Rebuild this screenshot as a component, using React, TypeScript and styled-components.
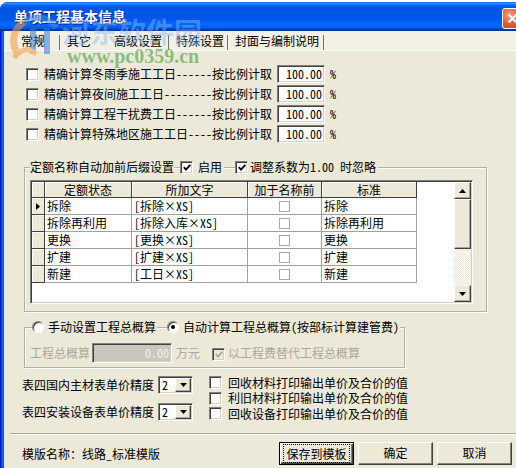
import React from "react";
import styled, { createGlobalStyle, css } from "styled-components";

const FONT = `"Noto Sans CJK SC", "Noto Sans", sans-serif`;
const BG = "#ECE9D8";

const GlobalStyle = createGlobalStyle`
  * { box-sizing: border-box; }
  html, body { margin: 0; padding: 0; background: #fff; }
  body {
    font-family: ${FONT};
    font-size: 12px;
    line-height: 14px;
    color: #000;
    font-feature-settings: "hwid" 1;
  }
`;

const raised = css`
  background: ${BG};
  border: 1px solid;
  border-color: #fff #404040 #404040 #fff;
  box-shadow: inset -1px -1px #aca899;
`;

const sunken = css`
  border: 1px solid;
  border-color: #808080 #fff #fff #808080;
  box-shadow: inset 1px 1px #404040, inset -1px -1px #d4d0c8;
`;

const Screen = styled.div`
  width: 516px;
  height: 468px;
  overflow: hidden;
  position: relative;
  background: #fff;
`;

const Window = styled.div`
  width: 528px;
  height: 490px;
  margin-top: 2px;
  border-radius: 8px 8px 0 0;
  overflow: hidden;
  background: linear-gradient(
    to right,
    #0019cf 0 1px,
    #0841d9 1px 2px,
    #166aee 2px 3px,
    #0855dd 3px 4px,
    #0855dd 4px
  );
  display: flex;
  flex-direction: column;
`;

const TitleBar = styled.div`
  height: 29px;
  flex: none;
  display: flex;
  align-items: flex-start;
  padding: 5px 5px 0 14px;
  background: linear-gradient(
    to bottom,
    #0058ee 0%,
    #3593ff 4%,
    #288eff 6%,
    #127dff 8%,
    #036ffc 10%,
    #0262ee 14%,
    #0057e5 20%,
    #0054e3 24%,
    #0055eb 56%,
    #005bf5 66%,
    #026afe 76%,
    #0062ef 86%,
    #0052d6 92%,
    #0040ab 94%,
    #003092 100%
  );
`;

const TitleText = styled.div`
  flex: 1;
  color: #fff;
  font-weight: bold;
  font-size: 14px;
  line-height: 18px;
  text-shadow: 1px 1px #0a1883;
`;

const CloseBtn = styled.div`
  width: 21px;
  height: 21px;
  margin-top: 1px;
  border: 1px solid #fff;
  border-radius: 3px;
  background: radial-gradient(circle at 35% 30%, #f3a27f 0%, #e3643c 45%, #c53c14 100%);
  display: flex;
  align-items: center;
  justify-content: center;
`;

const Body = styled.div`
  flex: 1;
  margin: 0 4px;
  background: ${BG};
  display: flex;
  flex-direction: column;
`;

const TabStrip = styled.div`
  height: 20px;
  flex: none;
  display: flex;
  padding-left: 10px;
  background: #f2f0e4;
  border-bottom: 1px solid #fff;
`;

const Tab = styled.div<{ $w: number; $sep: boolean }>`
  width: ${(p) => p.$w}px;
  padding-left: 7px;
  padding-top: 2px;
  line-height: 16px;
  white-space: nowrap;
  background: ${(p) =>
    p.$sep ? "linear-gradient(#707070, #707070) right 4px / 1px 15px no-repeat" : "none"};
`;

const Content = styled.div`
  display: flex;
  flex-direction: column;
  align-items: flex-start;
  padding-left: 18px;
`;

const RateList = styled.div`
  margin-top: 13px;
  display: flex;
  flex-direction: column;
`;

const RateRow = styled.div`
  height: 20px;
  display: flex;
  align-items: center;
  padding-left: 4px;
`;

const RateLabel = styled.span`
  margin-left: 5px;
  white-space: nowrap;
`;

const NumBox = styled.div<{ $w: number; $disabled?: boolean }>`
  width: ${(p) => p.$w}px;
  height: ${(p) => (p.$disabled ? 20 : 18)}px;
  ${sunken};
  background: ${(p) => (p.$disabled ? "#c9c7bd" : "#fff")};
  color: ${(p) => (p.$disabled ? "#f2f1ea" : "#000")};
  text-align: right;
  padding: 0 2px 0 0;
  line-height: ${(p) => (p.$disabled ? 18 : 16)}px;
  margin-left: ${(p) => (p.$disabled ? 2 : 5)}px;
  white-space: nowrap;
`;

const Unit = styled.span`
  margin-left: 5px;
`;

const CheckBox = styled.span<{ $disabled?: boolean }>`
  width: 13px;
  height: 13px;
  flex: none;
  display: inline-flex;
  align-items: center;
  justify-content: center;
  background: ${(p) => (p.$disabled ? BG : "#fff")};
  ${sunken};
`;

function Check({ checked, disabled }: { checked?: boolean; disabled?: boolean }) {
  return (
    <CheckBox $disabled={disabled}>
      {checked && (
        <svg width="8" height="7" viewBox="0 0 8 7">
          <path
            d="M0.8 3.2 L3 5.6 L7.3 0.8"
            stroke={disabled ? "#aca899" : "#000"}
            strokeWidth="1.8"
            fill="none"
          />
        </svg>
      )}
    </CheckBox>
  );
}

const RadioCircle = styled.span<{ $on?: boolean }>`
  width: 12px;
  height: 12px;
  flex: none;
  border-radius: 50%;
  background: #fff;
  border: 1px solid;
  border-color: #808080 #fff #fff #808080;
  box-shadow: inset 1px 1px #404040;
  display: inline-flex;
  align-items: center;
  justify-content: center;
  &::after {
    content: "";
    width: 4px;
    height: 4px;
    border-radius: 50%;
    background: ${(p) => (p.$on ? "#000" : "transparent")};
  }
`;

const Group = styled.div<{ $w: number; $mt: number; $pb: number }>`
  width: ${(p) => p.$w}px;
  margin-top: ${(p) => p.$mt}px;
  margin-left: 2px;
  padding-bottom: ${(p) => p.$pb}px;
  border: 1px solid #b4b1a2;
  box-shadow: 1px 1px 0 #fff, inset 1px 1px 0 #fff;
  display: flex;
  flex-direction: column;
  align-items: flex-start;
`;

const Legend = styled.div<{ $ml: number }>`
  margin: -8px 0 0 ${(p) => p.$ml}px;
  height: 14px;
  display: flex;
  align-items: center;
`;

const LegendSeg = styled.span<{ $pr?: number }>`
  height: 14px;
  display: flex;
  align-items: center;
  background: ${BG};
  padding-right: ${(p) => p.$pr ?? 0}px;
  white-space: nowrap;
`;

const LegendGap = styled.span<{ $w: number }>`
  width: ${(p) => p.$w}px;
  height: 14px;
`;

const SegText = styled.span<{ $ml: number; $muted?: boolean }>`
  margin-left: ${(p) => p.$ml}px;
  color: ${(p) => (p.$muted ? "#aca899" : "#000")};
  white-space: nowrap;
`;

const GridFrame = styled.div`
  margin: 6px 0 0 5px;
  width: 443px;
  height: 124px;
  padding: 1px;
  display: flex;
  background: #fff;
  ${sunken};
`;

const Table = styled.div`
  flex: 1;
  display: grid;
  grid-template-columns: 13px 87px 116px 74px 95px;
  grid-template-rows: 16px;
  grid-auto-rows: 17px;
  align-content: start;
  background: #fff;
`;

const HeadCell = styled.div`
  background: ${BG};
  border-right: 1px solid #404040;
  border-bottom: 1px solid #404040;
  box-shadow: inset 1px 1px #fff;
  text-align: center;
  line-height: 15px;
  white-space: nowrap;
`;

const IndCell = styled.div`
  background: ${BG};
  border-right: 1px solid #404040;
  border-bottom: 1px solid #404040;
  box-shadow: inset 1px 1px #fff;
  display: flex;
  align-items: center;
  justify-content: center;
`;

const Cell = styled.div<{ $center?: boolean }>`
  border-right: 1px solid #a0a0a0;
  border-bottom: 1px solid #a0a0a0;
  padding-left: ${(p) => (p.$center ? 0 : 2)}px;
  white-space: nowrap;
  overflow: hidden;
  display: flex;
  align-items: center;
  justify-content: ${(p) => (p.$center ? "center" : "flex-start")};
`;

const MiniBox = styled.span`
  width: 11px;
  height: 11px;
  border: 1px solid #a8a8a8;
  background: #fff;
`;

const ScrollBar = styled.div`
  width: 17px;
  flex: none;
  display: flex;
  flex-direction: column;
  background: repeating-conic-gradient(#fff 0 25%, ${BG} 0 50%) 0 0 / 2px 2px;
`;

const SBtn = styled.div`
  height: 17px;
  flex: none;
  ${raised};
  display: flex;
  align-items: center;
  justify-content: center;
`;

const Thumb = styled.div`
  height: 50px;
  flex: none;
  ${raised};
`;

const Track = styled.div`
  flex: 1;
`;

const InnerRow = styled.div`
  margin: 9px 0 0 5px;
  height: 20px;
  display: flex;
  align-items: center;
`;

const Muted = styled.span<{ $ml?: number }>`
  color: #aca899;
  margin-left: ${(p) => p.$ml ?? 0}px;
  white-space: nowrap;
`;

const BottomSection = styled.div`
  margin-top: 7px;
  display: flex;
`;

const LeftCol = styled.div`
  padding-top: 1px;
  display: flex;
  flex-direction: column;
  gap: 9px;
`;

const SelectRow = styled.div`
  height: 18px;
  display: flex;
  align-items: center;
`;

const SelectLabel = styled.span`
  width: 136px;
  white-space: nowrap;
`;

const SelectBox = styled.div`
  width: 35px;
  height: 18px;
  padding: 1px;
  background: #fff;
  display: flex;
  align-items: center;
  ${sunken};
`;

const SelectValue = styled.span`
  flex: 1;
  padding-left: 2px;
  line-height: 14px;
`;

const SelectBtn = styled.span`
  width: 16px;
  height: 14px;
  ${raised};
  display: flex;
  align-items: center;
  justify-content: center;
`;

const RightCol = styled.div`
  margin-left: 16px;
  display: flex;
  flex-direction: column;
`;

const OptRow = styled.div`
  height: 15.5px;
  display: flex;
  align-items: center;
`;

const OptText = styled.span`
  margin-left: 6px;
  white-space: nowrap;
`;

const Separator = styled.div`
  margin: 11px 0 0 6px;
  height: 2px;
  border-top: 1px solid #aca899;
  border-bottom: 1px solid #fff;
`;

const BottomBar = styled.div`
  padding: 7px 12px 0 18px;
  display: flex;
  align-items: flex-start;
  gap: 4px;
`;

const TemplateName = styled.div`
  flex: 1;
  line-height: 23px;
  white-space: nowrap;
`;

const Button = styled.div<{ $default?: boolean }>`
  width: 75px;
  height: 23px;
  display: flex;
  align-items: center;
  justify-content: center;
  background: ${BG};
  border: 1px solid;
  ${(p) =>
    p.$default
      ? css`
          border-color: #000;
          box-shadow: inset 1px 1px #fff, inset -1px -1px #404040, inset -2px -2px #808080;
        `
      : css`
          border-color: #fff #404040 #404040 #fff;
          box-shadow: inset -1px -1px #808080;
        `}
`;

const Focus = styled.span`
  border: 1px dotted #000;
  padding: 1px 2px;
  line-height: 15px;
`;

const Watermark = styled.div`
  position: absolute;
  left: 0;
  top: 0;
  width: 220px;
  height: 70px;
  pointer-events: none;
`;

const WmLogo = styled.svg`
  position: absolute;
  left: 10px;
  top: 14px;
  opacity: 0.55;
`;

const WmTitle = styled.div`
  position: absolute;
  left: 62px;
  top: 14px;
  font-size: 28px;
  line-height: 34px;
  font-weight: bold;
  color: rgba(140, 185, 245, 0.45);
  letter-spacing: 0px;
  white-space: nowrap;
`;

const WmUrl = styled.div`
  position: absolute;
  left: 67px;
  top: 46px;
  font-family: "Liberation Serif", serif;
  font-feature-settings: normal;
  font-size: 20px;
  line-height: 20px;
  font-weight: bold;
  color: rgba(70, 160, 60, 0.6);
  white-space: nowrap;
`;

const tabs = [
  { label: "常规", w: 46, sep: true },
  { label: "其它", w: 47, sep: false },
  { label: "高级设置", w: 62, sep: true },
  { label: "特殊设置", w: 59, sep: true },
  { label: "封面与编制说明", w: 96, sep: true },
];

const rates = [
  { name: "精确计算冬雨季施工工日", dashes: "------" },
  { name: "精确计算夜间施工工日", dashes: "--------" },
  { name: "精确计算工程干扰费工日", dashes: "------" },
  { name: "精确计算特殊地区施工工日", dashes: "----" },
];

const rows = [
  ["拆除", "[拆除×XS]", "拆除"],
  ["拆除再利用", "[拆除入库×XS]", "拆除再利用"],
  ["更换", "[更换×XS]", "更换"],
  ["扩建", "[扩建×XS]", "扩建"],
  ["新建", "[工日×XS]", "新建"],
];

const options = [
  "回收材料打印输出单价及合价的值",
  "利旧材料打印输出单价及合价的值",
  "回收设备打印输出单价及合价的值",
];

const Tri = ({ dir }: { dir: "up" | "down" | "right" }) => {
  if (dir === "right")
    return (
      <svg width="4" height="7" viewBox="0 0 4 7">
        <polygon points="0,0 4,3.5 0,7" fill="#000" />
      </svg>
    );
  return (
    <svg width="7" height="4" viewBox="0 0 7 4">
      <polygon points={dir === "up" ? "0,4 3.5,0 7,4" : "0,0 7,0 3.5,4"} fill="#000" />
    </svg>
  );
};

export default function App() {
  return (
    <>
      <GlobalStyle />
      <Screen>
        <Window>
          <TitleBar>
            <TitleText>单项工程基本信息</TitleText>
            <CloseBtn>
              <svg width="11" height="11" viewBox="0 0 11 11">
                <path d="M1.5 1.5 L9.5 9.5 M9.5 1.5 L1.5 9.5" stroke="#fff" strokeWidth="2.2" />
              </svg>
            </CloseBtn>
          </TitleBar>
          <Body>
            <TabStrip>
              {tabs.map((t) => (
                <Tab key={t.label} $w={t.w} $sep={t.sep}>
                  {t.label}
                </Tab>
              ))}
            </TabStrip>
            <Content>
              <RateList>
                {rates.map((r) => (
                  <RateRow key={r.name}>
                    <Check />
                    <RateLabel>
                      {r.name}
                      {r.dashes}按比例计取
                    </RateLabel>
                    <NumBox $w={48}>100.00</NumBox>
                    <Unit>%</Unit>
                  </RateRow>
                ))}
              </RateList>

              <Group $w={463} $mt={23} $pb={7}>
                <Legend $ml={5}>
                  <LegendSeg>定额名称自动加前后缀设置</LegendSeg>
                  <LegendGap $w={6} />
                  <LegendSeg $pr={2}>
                    <Check checked />
                    <SegText $ml={5}>启用</SegText>
                  </LegendSeg>
                  <LegendGap $w={11} />
                  <LegendSeg $pr={2}>
                    <Check checked />
                    <SegText $ml={2}>调整系数为1.00 时忽略</SegText>
                  </LegendSeg>
                </Legend>
                <GridFrame>
                  <Table>
                    <HeadCell />
                    <HeadCell>定额状态</HeadCell>
                    <HeadCell>所加文字</HeadCell>
                    <HeadCell>加于名称前</HeadCell>
                    <HeadCell>标准</HeadCell>
                    {rows.map((r, i) => (
                      <React.Fragment key={r[0]}>
                        <IndCell>{i === 0 && <Tri dir="right" />}</IndCell>
                        <Cell>{r[0]}</Cell>
                        <Cell>{r[1]}</Cell>
                        <Cell $center>
                          <MiniBox />
                        </Cell>
                        <Cell>{r[2]}</Cell>
                      </React.Fragment>
                    ))}
                  </Table>
                  <ScrollBar>
                    <SBtn>
                      <Tri dir="up" />
                    </SBtn>
                    <Thumb />
                    <Track />
                    <SBtn>
                      <Tri dir="down" />
                    </SBtn>
                  </ScrollBar>
                </GridFrame>
              </Group>

              <Group $w={381} $mt={15} $pb={4}>
                <Legend $ml={7}>
                  <LegendSeg $pr={1}>
                    <RadioCircle />
                    <SegText $ml={4}>手动设置工程总概算</SegText>
                  </LegendSeg>
                  <LegendGap $w={10} />
                  <LegendSeg $pr={1}>
                    <RadioCircle $on />
                    <SegText $ml={4}>自动计算工程总概算(按部标计算建管费)</SegText>
                  </LegendSeg>
                </Legend>
                <InnerRow>
                  <Muted>工程总概算</Muted>
                  <NumBox $w={80} $disabled>
                    0.00
                  </NumBox>
                  <Muted $ml={4}>万元</Muted>
                  <Muted $ml={12}>
                    <Check checked disabled />
                  </Muted>
                  <Muted $ml={3}>以工程费替代工程总概算</Muted>
                </InnerRow>
              </Group>

              <BottomSection>
                <LeftCol>
                  {["表四国内主材表单价精度", "表四安装设备表单价精度"].map((l) => (
                    <SelectRow key={l}>
                      <SelectLabel>{l}</SelectLabel>
                      <SelectBox>
                        <SelectValue>2</SelectValue>
                        <SelectBtn>
                          <Tri dir="down" />
                        </SelectBtn>
                      </SelectBox>
                    </SelectRow>
                  ))}
                </LeftCol>
                <RightCol>
                  {options.map((o) => (
                    <OptRow key={o}>
                      <Check />
                      <OptText>{o}</OptText>
                    </OptRow>
                  ))}
                </RightCol>
              </BottomSection>
            </Content>
            <Separator />
            <BottomBar>
              <TemplateName>模版名称：线路_标准模版</TemplateName>
              <Button $default>
                <Focus>保存到模板</Focus>
              </Button>
              <Button>确定</Button>
              <Button>取消</Button>
            </BottomBar>
          </Body>
        </Window>
        <Watermark>
          <WmLogo width="52" height="48" viewBox="0 0 52 48">
            <path d="M8 40 A22 22 0 0 1 14 8" stroke="#f39a3c" strokeWidth="7" fill="none" />
            <path d="M14 8 A22 22 0 0 1 46 14" stroke="#4a8ad8" strokeWidth="6" fill="none" />
            <rect x="20" y="14" width="6" height="26" fill="#3a7acc" />
            <rect x="34" y="14" width="6" height="26" fill="#3a7acc" />
            <rect x="20" y="24" width="20" height="5" fill="#3a7acc" />
            <path d="M4 44 Q14 30 26 40" stroke="#f39a3c" strokeWidth="5" fill="none" />
          </WmLogo>
          <WmTitle>河东软件园</WmTitle>
          <WmUrl>www.pc0359.cn</WmUrl>
        </Watermark>
      </Screen>
    </>
  );
}
